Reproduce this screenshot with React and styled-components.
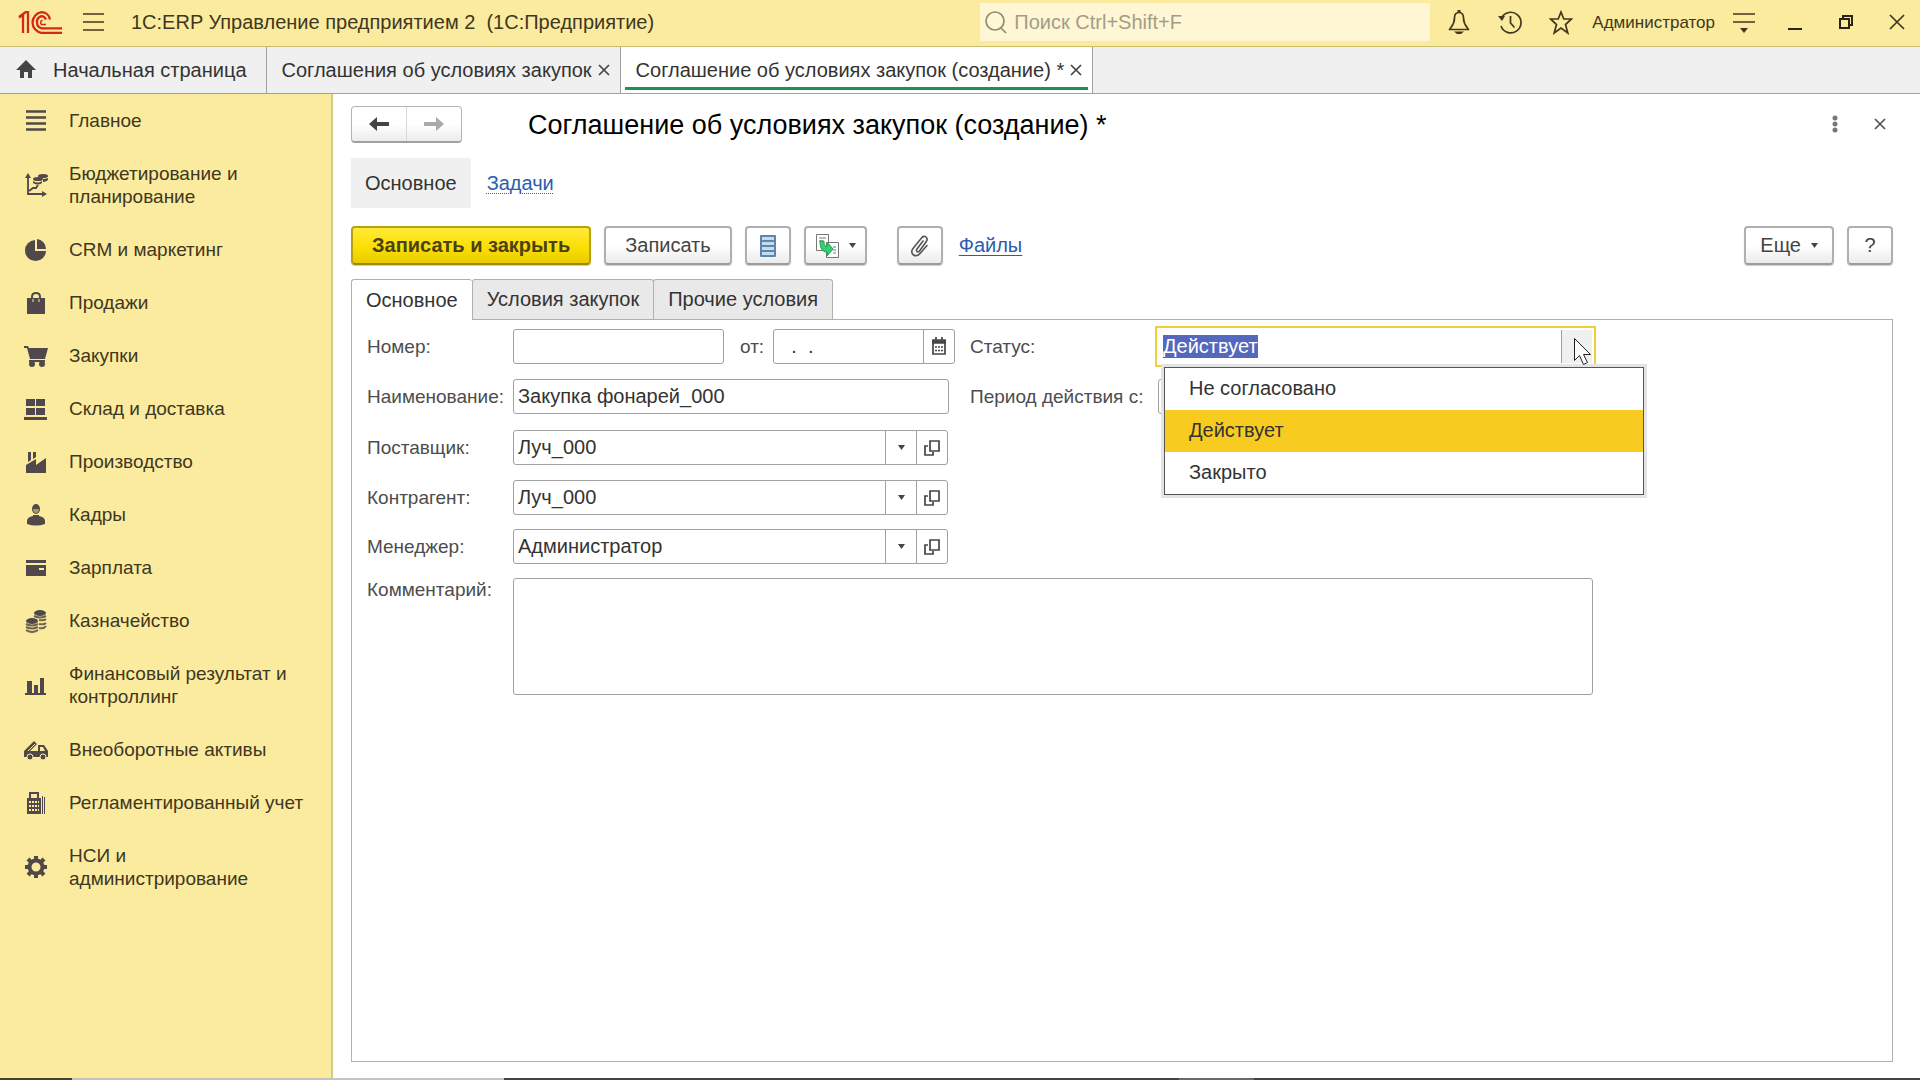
import React, { useEffect, useRef } from 'react'
import styled, { createGlobalStyle } from 'styled-components'

const GlobalStyle = createGlobalStyle`
    * {
        box-sizing: border-box;
    }

    body {
        margin: 0;
        background: #fff;
        color: #333;
        font-family: "Liberation Sans", Arial, sans-serif;
        font-size: 20px;
        line-height: 23px;
    }

    button, input, textarea {
        margin: 0;
        font: inherit;
        color: inherit;
    }

    svg {
        display: block;
        flex: none;
    }
`;

const Page = styled.div`
    min-height: 100vh;
    display: flex;
    flex-direction: column;
`;

/* ---------- top bar ---------- */

const TopBar = styled.header`
    height: 47px;
    padding: 0 10px 2px 18px;
    display: flex;
    align-items: center;
    background: #fbeb9e;
    border-bottom: 1px solid #c9bd72;
    color: #40371f;
`;

const IconButton = styled.button`
    padding: 0;
    border: 0;
    background: none;
    display: flex;
    align-items: center;
    justify-content: center;
    flex: none;
    width: ${props => props.$width || 24}px;
    height: ${props => props.$height || 32}px;
`;

const MenuButton = styled(IconButton)`
    margin: 0 25px 0 20px;
`;

const AppTitle = styled.div`
    flex: 1;
    white-space: pre;
`;

const Search = styled.label`
    width: 450px;
    height: 38px;
    padding-left: 4px;
    display: flex;
    align-items: center;
    gap: 6px;
    background: #fff6d4;
    color: #8f8a78;
`;

const SearchInput = styled.input`
    flex: 1;
    min-width: 0;
    padding: 0;
    border: 0;
    outline: 0;
    background: none;

    &::placeholder {
        color: #a39d88;
        opacity: 1;
    }
`;

const TopTools = styled.div`
    margin-left: 17px;
    display: flex;
    gap: 27px;
`;

const UserLink = styled.a`
    margin: 0 18px 0 19px;
    color: inherit;
    font-size: 17px;
    text-decoration: none;
`;

const WindowTools = styled.div`
    margin-left: 28px;
    padding-right: 1px;
    display: flex;
    gap: 27px;
`;

/* ---------- open windows ---------- */

const WindowTabs = styled.nav`
    height: 47px;
    display: flex;
    background: #f0f0f0;
    border-bottom: 1px solid #a0a0a0;
`;

const WindowTab = styled.div`
    padding: 0 4px 0 ${props => props.$home ? 14 : 15}px;
    display: flex;
    align-items: center;
    position: relative;
    background: ${props => props.$active ? '#fff' : 'none'};
    border-right: 1px solid #a0a0a0;

    &::after {
        content: "";
        display: ${props => props.$active ? 'block' : 'none'};
        position: absolute;
        left: 4px;
        right: 4px;
        bottom: 3px;
        height: 3px;
        background: #1c9256;
    }
`;

const WindowLink = styled.a`
    padding-right: ${props => props.$home ? 15 : 0}px;
    display: flex;
    align-items: center;
    gap: 15px;
    color: #333;
    text-decoration: none;
    white-space: nowrap;
`;

/* ---------- sections ---------- */

const Body = styled.div`
    flex: 1;
    display: flex;
`;

const Sidebar = styled.nav`
    width: 333px;
    flex: none;
    background: #fbeb9e;
    border-right: 2px solid #d8ca80;
    font-size: 19px;
`;

const Section = styled.a`
    padding: 15px 20px 15px 23px;
    display: flex;
    align-items: center;
    gap: 20px;
    color: #40371f;
    text-decoration: none;
`;

const SectionPicture = styled.svg`
    margin: -2px 0;
`;

const SectionName = styled.span`
    flex: 1;
    white-space: pre-line;
`;

/* ---------- form ---------- */

const Main = styled.main`
    flex: 1;
    min-width: 0;
    padding: 12px 27px 16px 18px;
    display: flex;
    flex-direction: column;
`;

const FormHeader = styled.div`
    display: flex;
    align-items: center;
`;

const History = styled.div`
    width: 111px;
    height: 37px;
    display: flex;
    border: 1px solid #b4b4b4;
    border-bottom: 2px solid #a0a0a0;
    border-radius: 4px;
    background: linear-gradient(#fff 50%, #ececec);
`;

const HistoryButton = styled(IconButton)`
    flex: 1;
    height: 34px;

    & + & {
        border-left: 1px solid #d8d8d8;
    }
`;

const FormTitle = styled.h1`
    margin: 0 0 0 66px;
    flex: 1;
    color: #000;
    font-size: 27px;
    line-height: 32px;
    font-weight: normal;
`;

const FormTools = styled.div`
    padding-bottom: 2px;
    display: flex;
    gap: 20px;
`;

const FormNav = styled.nav`
    margin-top: 15px;
    display: flex;
    align-items: center;
    gap: 16px;
`;

const FormNavCurrent = styled.span`
    padding: 14px 14px 13px;
    background: #f0f0f0;
`;

const FormLink = styled.a`
    color: #2a5db0;
    text-decoration: underline ${props => props.$dotted ? 'dotted' : 'solid'} 1px;
    text-underline-offset: 3px;
`;

const Toolbar = styled.div`
    margin-top: 18px;
    display: flex;
    align-items: center;
    gap: 13px;
`;

const ToolButton = styled.button`
    min-width: 46px;
    height: 39px;
    padding: 0 ${props => props.$pad || 0}px;
    display: flex;
    align-items: center;
    justify-content: center;
    gap: 10px;
    color: #444;
    background: linear-gradient(#fff 50%, #ebebeb);
    border: 2px solid #b0b0b0;
    border-bottom-color: #9c9c9c;
    border-radius: 4px;
    box-shadow: 0 1px 1px #ccc;
`;

const PrimaryButton = styled(ToolButton)`
    color: #4a4212;
    font-weight: bold;
    background: linear-gradient(#ffea38, #fade00 60%, #e8ca00);
    border-color: #b8a210;
    border-bottom-color: #9c8808;
`;

const AttachGroup = styled.div`
    margin-left: 17px;
    display: flex;
    align-items: center;
    gap: 16px;
`;

const ToolbarEnd = styled.div`
    margin-left: auto;
    display: flex;
    gap: 13px;
`;

const Tabs = styled.div`
    margin-top: 14px;
    display: flex;
`;

const Tab = styled.button`
    height: ${props => props.$active ? 41 : 40}px;
    margin-bottom: ${props => props.$active ? -1 : 0}px;
    margin-right: ${props => props.$active ? 0 : -1}px;
    padding: 0 14px;
    position: relative;
    color: #333;
    background: ${props => props.$active ? '#fff' : '#e9e9e9'};
    border: 1px solid #b0b0b0;
    border-right-width: ${props => props.$active ? 0 : 1}px;
    border-bottom-width: 0;
    border-radius: 3px 3px 0 0;
`;

const Panel = styled.section`
    flex: 1;
    padding: 8px 15px;
    display: grid;
    grid-template-columns: 146px 443px 14px 188px 435px;
    grid-template-rows: 36px 37px 37px 35px 35px 117px;
    row-gap: 14px;
    align-items: center;
    border: 1px solid #b0b0b0;
`;

const Label = styled.label`
    color: #4d4d4d;
    font-size: 19px;
    white-space: nowrap;
    grid-column: ${props => props.$second ? 4 : 1};
    align-self: ${props => props.$top ? 'start' : 'center'};
`;

const Row = styled.div`
    grid-column: 2;
    display: flex;
    align-items: center;
`;

const Field = styled.div`
    height: 35px;
    width: ${props => props.$width}px;
    display: flex;
    background: #fff;
    border: 1px solid #a0a0a0;
    border-radius: 3px;
`;

const FieldInput = styled.input`
    flex: 1;
    min-width: 0;
    padding: 0 0 0 ${props => props.$pad || 4}px;
    border: 0;
    outline: 0;
    background: none;
    color: #333;
`;

const FieldButton = styled.button`
    width: 31px;
    padding: 0;
    display: flex;
    align-items: center;
    justify-content: center;
    background: none;
    border: 0;
    border-left: 1px solid #a0a0a0;
`;

const DateLabel = styled.label`
    margin: 0 9px 0 16px;
    color: #4d4d4d;
    font-size: 19px;
`;

const Comment = styled.textarea`
    grid-column: 2 / 6;
    display: block;
    width: 100%;
    height: 117px;
    padding: 4px;
    border: 1px solid #a0a0a0;
    border-radius: 3px;
    outline: 0;
    resize: none;
`;

const StatusBox = styled.div`
    grid-column: 5;
    height: 41px;
    margin: 0 -3px;
    padding: 2px;
    display: flex;
    position: relative;
    background: #fff;
    border: 2px solid #eed03c;
`;

const StatusInput = styled(FieldInput)`
    &::selection {
        color: #fff;
        background: #5468bd;
    }
`;

const StatusButton = styled(FieldButton)`
    background: #f0f0f0;
`;

const Options = styled.ul`
    position: absolute;
    z-index: 1;
    top: 39px;
    left: 7px;
    width: 480px;
    margin: 0;
    padding: 0;
    list-style: none;
    background: #fff;
    border: 1px solid #555;
    box-shadow: 0 0 0 3px #e4e4e4;
`;

const Option = styled.li`
    height: 42px;
    padding: 0 24px;
    display: flex;
    align-items: center;
    color: #333;
    background: ${props => props.$selected ? '#f8cb20' : '#fff'};
`;

const Pointer = styled.svg`
    position: absolute;
    z-index: 2;
    top: 9px;
    left: 416px;
`;

const PeriodField = styled(Field)`
    grid-column: 5;
`;

/* ---------- strip under the window ---------- */

const Strip = styled.footer`
    height: 2px;
    display: grid;
    grid-template-columns: 72px 432px 1fr 75px 666px;
    background: #444;
`;

const StripPart = styled.div`
    background: ${props => props.$color};
`;

/* ---------- icons ---------- */

const Logo = () => (
    <svg width="44" height="23" viewBox="0 0 44 23" fill="none" stroke="#d4281c" strokeWidth="2.300">
        <path d="M1 6.500L5 3.500V22M10 22V1.200H7.500L1 6" />
        <path d="M32 8.500C31 4 27.500 1.200 23.500 1.200A10.400 10.400 0 0 0 23.500 21.800H44" />
        <path d="M28 8.500C27 6.500 25.500 5.200 23.500 5.200A6.300 6.300 0 0 0 23.500 17.300H44" />
        <path d="M24.500 9.200A2.500 2.500 0 0 0 23.500 13.500H28" strokeWidth="1.500" />
    </svg>
)

const Lines = () => (
    <svg width="22" height="20" stroke="#40371f" strokeWidth="1.600"><path d="M0 2H21M0 10H21M0 18H21" /></svg>
)

const Magnifier = () => (
    <svg width="24" height="24" fill="none" stroke="#8f8a78" strokeWidth="1.700">
        <circle cx="11" cy="11" r="9" /><path d="M17 18L22 23" />
    </svg>
)

const Bell = () => (
    <svg width="24" height="26" fill="none" stroke="#40371f" strokeWidth="1.700">
        <path d="M12 3.500C8.500 3.500 7.500 6 7.500 9C7.500 15 5 17 2.500 20.500H21.500C19 17 16.500 15 16.500 9C16.500 6 15.500 3.500 12 3.500Z" strokeLinejoin="round" />
        <path d="M12 1V4" strokeWidth="3" /><path d="M7 22.500H17L14 25H10Z" fill="#40371f" stroke="none" />
    </svg>
)

const Clock = () => (
    <svg width="24" height="26" fill="none" stroke="#40371f" strokeWidth="1.700">
        <path d="M3.500 9A10.300 10.300 0 1 1 3 17" /><path d="M12.500 7V14L16.500 18.500" />
        <path d="M0 7L7 7L4 12Z" fill="#40371f" stroke="none" />
    </svg>
)

const Star = () => (
    <svg width="24" height="26" fill="none" stroke="#40371f" strokeWidth="1.700">
        <path d="M12 3L14.800 10H22.500L16.500 15.500L18.800 24L12 19L5.200 24L7.500 15.500L1.500 10H9.200Z" />
    </svg>
)

const Settings = () => (
    <svg width="22" height="22" stroke="#40371f" strokeWidth="1.600">
        <path d="M0 3H22M0 11H22" /><path d="M7 17H15L11 22Z" fill="#40371f" stroke="none" />
    </svg>
)

const Minimize = () => (
    <svg width="14" height="20" stroke="#2c2514" strokeWidth="2"><path d="M0 17H14" /></svg>
)

const Restore = () => (
    <svg width="16" height="16" fill="none" stroke="#2c2514" strokeWidth="2">
        <path d="M2 5H11V14H2ZM5 5V2H14V11H11" />
    </svg>
)

const Cross = ({ size, color = '#444' }) => (
    <svg width={size} height={size} viewBox={`0 0 ${size} ${size}`} stroke={color} strokeWidth="1.700">
        <path d={`M1 1L${size - 1} ${size - 1}M${size - 1} 1L1 ${size - 1}`} />
    </svg>
)

const Home = () => (
    <svg width="24" height="20" fill="#444"><path d="M12 0L22 10H18V18H14V12H10V18H6V10H2Z" /></svg>
)

const Arrow = ({ color, flip }) => (
    <svg width="22" height="16" viewBox="0 0 22 16" fill={color}>
        <path d={flip ? 'M21 8L13 1V6H1V10H13V15Z' : 'M1 8L9 1V6H21V10H9V15Z'} />
    </svg>
)

const Dots = () => (
    <svg width="6" height="18" fill="#777"><circle cx="3" cy="3" r="2.500" /><circle cx="3" cy="9" r="2.500" /><circle cx="3" cy="15" r="2.500" /></svg>
)

const Caret = () => (
    <svg width="7" height="5" fill="#444"><path d="M0 0H7L3.500 5Z" /></svg>
)

const OpenIcon = () => (
    <svg width="16" height="18" fill="none" stroke="#444" strokeWidth="1.700">
        <path d="M6 2H15V12H6Z" /><path d="M4 7H1V16H9V13" />
    </svg>
)

const Calendar = () => (
    <svg width="14" height="18" fill="none" stroke="#444" strokeWidth="1.700">
        <path d="M1 3H13V17H1Z" /><path d="M0 5H14" strokeWidth="3.500" /><path d="M4 0V3M10 0V3" />
        <path d="M3 10H11M3 13.500H11" strokeDasharray="2 1" />
    </svg>
)

const ListIcon = () => (
    <svg width="16" height="22">
        <rect width="16" height="22" rx="1" fill="#5d87aa" />
        <path d="M2 3.500H14M2 8.500H14M2 13.500H14M2 18.500H14" stroke="#c3dcef" strokeWidth="3" />
    </svg>
)

const CopyIcon = () => (
    <svg width="24" height="24" fill="none" stroke="#777">
        <path d="M1.500 0.500H13.500V16.500H1.500Z" fill="#fff" /><path d="M4 4H11M4 7H8" />
        <path d="M11.500 8.500H23.500V23.500H11.500Z" fill="#fff" /><path d="M18 13H21M18 16H21M18 19H21" />
        <path d="M5 7H9C9 11 10 12.500 12 12.500V8L18 15L12 22V18C7 18 5 14 5 7Z" fill="#35cf72" stroke="#209c50" />
    </svg>
)

const Clip = () => (
    <svg width="20" height="22" fill="none" stroke="#555" strokeWidth="1.600" strokeLinecap="round">
        <path d="M13 6L7 14C5.500 16.500 8 18 9.500 16L16 7C19 3 14.500 -1 11.500 3L3 13.500C-1 18.500 5.500 23.500 10 18.500L17 10.500" />
    </svg>
)

const sectionIcons = {
    lines: <path d="M2 2.500H22M2 8.500H22M2 14.500H22M2 20.500H22" stroke="#50484a" strokeWidth="2.500" />,
    budget: <>
        <path d="M4 4V21H20M5 18L9 15H12L14 12" fill="none" stroke="#50484a" strokeWidth="1.800" />
        <path d="M1 5L4 0L7 5ZM18 18L23 21L18 24Z" />
        <ellipse cx="19" cy="3" rx="5" ry="2" /><ellipse cx="14" cy="6" rx="5" ry="2" />
        <path d="M9 8Q14 11 18 8V10Q14 13 9 10ZM19 6Q22 6 24 5V7Q22 9 19 9Z" />
    </>,
    pie: <path d="M11 2A10.500 10.500 0 1 0 22 13H11ZM13 1V11H22A10 10 0 0 0 13 1Z" />,
    bag: <><path d="M3 7H21V23H3Z" /><path d="M8 11V6Q8 2 12 2T16 6V11" fill="none" stroke="#50484a" strokeWidth="2" /><path d="M9 8V11M15 8V11" stroke="#fbeb9e" /></>,
    cart: <><path d="M0 2H4L5 4H24L21 15H6L3 4H0ZM5 16H21V18H5Z" /><circle cx="8" cy="20" r="3" /><circle cx="18" cy="20" r="3" /></>,
    boxes: <path d="M2 2H11V9H2ZM12 2H21V9H12ZM2 11H11V18H2ZM12 11H21V18H12ZM0 20H23V23H0Z" />,
    factory: <path d="M2 23V15L12 9V15L22 8V23ZM4 2H7V10L4 12ZM9 2H12V7L9 9Z" />,
    person: <><ellipse cx="12" cy="6" rx="4" ry="5" /><path d="M9 12H15V13Q21 14 21 18V21Q12 24 3 21V18Q3 14 9 13Z" /><path d="M9 6H15Q15 10 12 10T9 6Z" fill="#a0976f" /></>,
    card: <><path d="M2 4H22V7H2ZM2 9H22V20H2Z" /><path d="M15 12H20V14H15Z" fill="#fbeb9e" /></>,
    coins: <>
        <ellipse cx="16" cy="4" rx="6" ry="3" /><ellipse cx="8" cy="12" rx="6" ry="3" />
        <path d="M10 7Q16 10 22 7M15 11Q20 12 22 10M15 15Q20 16 22 14M15 19Q20 20 22 17M2 15Q8 18 14 15M2 18Q8 21 14 18M2 21Q8 25 14 21" fill="none" stroke="#6d6453" strokeWidth="2" />
    </>,
    bars: <path d="M3 8H8V20H3ZM10 12H14V20H10ZM16 5H20V20H16ZM1 20H22V22H1Z" />,
    truck: <>
        <path d="M0 13L10 3L13 6L6 13H14V7H20L24 13V19H0Z" /><path d="M16 9H19L21 13H16Z" fill="#fbeb9e" />
        <path d="M4 13L11 6" stroke="#fbeb9e" />
        <circle cx="6" cy="19" r="3" stroke="#fbeb9e" /><circle cx="19" cy="19" r="3" stroke="#fbeb9e" />
    </>,
    register: <>
        <path d="M5 1H15V7H17V23H3V7H5ZM18 5H19V23H18ZM20 6H21V23H20Z" /><path d="M7 3H13V7H7Z" fill="#fbeb9e" />
        <path d="M5 11H15M5 15H15M5 19H15" stroke="#fbeb9e" strokeWidth="2" strokeDasharray="2 1" />
    </>,
    gear: <>
        <circle cx="12" cy="12" r="6.500" fill="none" stroke="#50484a" strokeWidth="4" />
        <path d="M12 1V5M12 19V23M1 12H5M19 12H23M4 4L7 7M17 17L20 20M20 4L17 7M7 17L4 20" stroke="#50484a" strokeWidth="4" />
    </>,
}

const sections = [
    { name: 'Главное', icon: 'lines' },
    { name: 'Бюджетирование и\nпланирование', icon: 'budget' },
    { name: 'CRM и маркетинг', icon: 'pie' },
    { name: 'Продажи', icon: 'bag' },
    { name: 'Закупки', icon: 'cart' },
    { name: 'Склад и доставка', icon: 'boxes' },
    { name: 'Производство', icon: 'factory' },
    { name: 'Кадры', icon: 'person' },
    { name: 'Зарплата', icon: 'card' },
    { name: 'Казначейство', icon: 'coins' },
    { name: 'Финансовый результат и\nконтроллинг', icon: 'bars' },
    { name: 'Внеоборотные активы', icon: 'truck' },
    { name: 'Регламентированный учет', icon: 'register' },
    { name: 'НСИ и\nадминистрирование', icon: 'gear' },
]

const references = [
    { id: 'supplier', label: 'Поставщик:', value: 'Луч_000' },
    { id: 'contractor', label: 'Контрагент:', value: 'Луч_000' },
    { id: 'manager', label: 'Менеджер:', value: 'Администратор' },
]

const statuses = ['Не согласовано', 'Действует', 'Закрыто']

function SectionIcon({ name }) {
    return <SectionPicture width="26" height="26" viewBox="-1 -1 26 26" fill="#50484a">{sectionIcons[name]}</SectionPicture>
}

function Header() {
    return (<TopBar>
                <Logo />
                <MenuButton aria-label="Меню"><Lines /></MenuButton>
                <AppTitle>1С:ERP Управление предприятием 2  (1С:Предприятие)</AppTitle>
                <Search>
                    <Magnifier />
                    <SearchInput placeholder="Поиск Ctrl+Shift+F" aria-label="Поиск" />
                </Search>
                <TopTools>
                    <IconButton aria-label="Уведомления"><Bell /></IconButton>
                    <IconButton aria-label="История"><Clock /></IconButton>
                    <IconButton aria-label="Избранное"><Star /></IconButton>
                </TopTools>
                <UserLink href="#user">Администратор</UserLink>
                <IconButton $width={22} aria-label="Настройки"><Settings /></IconButton>
                <WindowTools>
                    <IconButton aria-label="Свернуть"><Minimize /></IconButton>
                    <IconButton aria-label="Восстановить"><Restore /></IconButton>
                    <IconButton aria-label="Закрыть"><Cross size={16} color="#40371f" /></IconButton>
                </WindowTools>
            </TopBar>)
}

function OpenWindows() {
    return (<WindowTabs>
                <WindowTab $home>
                    <WindowLink $home href="#home"><Home />Начальная страница</WindowLink>
                </WindowTab>
                <WindowTab>
                    <WindowLink href="#agreements">Соглашения об условиях закупок</WindowLink>
                    <IconButton aria-label="Закрыть вкладку"><Cross size={12} /></IconButton>
                </WindowTab>
                <WindowTab $active>
                    <WindowLink href="#agreement">Соглашение об условиях закупок (создание) *</WindowLink>
                    <IconButton aria-label="Закрыть вкладку"><Cross size={12} /></IconButton>
                </WindowTab>
            </WindowTabs>)
}

function StatusField() {
    const input = useRef(null)

    useEffect(() => {
        input.current.focus()
        input.current.select()
    }, [])

    return (<StatusBox>
                <StatusInput ref={input} id="status" role="combobox" aria-expanded="true" aria-controls="statuses" defaultValue="Действует" />
                <StatusButton aria-label="Выбрать статус"><Caret /></StatusButton>
                <Options id="statuses" role="listbox">
                    {statuses.map(status => (
                        <Option key={status} role="option" aria-selected={status === 'Действует'} $selected={status === 'Действует'}>{status}</Option>
                    ))}
                </Options>
                <Pointer width="20" height="30" viewBox="0 0 20 30" fill="#fff" stroke="#222">
                    <path d="M1.500 1.500V23.500L6.500 18.500L10.500 27.500L14.500 25.500L10.500 17.500H17.500Z" />
                </Pointer>
            </StatusBox>)
}

function App() {
    return (<Page>
                <GlobalStyle />
                <Header />
                <OpenWindows />
                <Body>
                    <Sidebar>
                        {sections.map(section => (
                            <Section key={section.icon} href={'#' + section.icon}>
                                <SectionIcon name={section.icon} />
                                <SectionName>{section.name}</SectionName>
                            </Section>
                        ))}
                    </Sidebar>
                    <Main>
                        <FormHeader>
                            <History>
                                <HistoryButton aria-label="Назад"><Arrow color="#444" /></HistoryButton>
                                <HistoryButton aria-label="Вперед"><Arrow color="#aaa" flip /></HistoryButton>
                            </History>
                            <FormTitle>Соглашение об условиях закупок (создание) *</FormTitle>
                            <FormTools>
                                <IconButton aria-label="Действия"><Dots /></IconButton>
                                <IconButton $width={26} aria-label="Закрыть форму"><Cross size={12} color="#555" /></IconButton>
                            </FormTools>
                        </FormHeader>
                        <FormNav>
                            <FormNavCurrent>Основное</FormNavCurrent>
                            <FormLink $dotted href="#tasks">Задачи</FormLink>
                        </FormNav>
                        <Toolbar>
                            <PrimaryButton $pad={19}>Записать и закрыть</PrimaryButton>
                            <ToolButton $pad={19}>Записать</ToolButton>
                            <ToolButton aria-label="Список"><ListIcon /></ToolButton>
                            <ToolButton $pad={9} aria-label="Создать на основании"><CopyIcon /><Caret /></ToolButton>
                            <AttachGroup>
                                <ToolButton aria-label="Прикрепить"><Clip /></ToolButton>
                                <FormLink href="#files">Файлы</FormLink>
                            </AttachGroup>
                            <ToolbarEnd>
                                <ToolButton $pad={14}>Еще<Caret /></ToolButton>
                                <ToolButton>?</ToolButton>
                            </ToolbarEnd>
                        </Toolbar>
                        <Tabs role="tablist">
                            <Tab role="tab" aria-selected="true" $active>Основное</Tab>
                            <Tab role="tab">Условия закупок</Tab>
                            <Tab role="tab">Прочие условия</Tab>
                        </Tabs>
                        <Panel>
                            <Label htmlFor="number">Номер:</Label>
                            <Row>
                                <Field $width={211}><FieldInput id="number" /></Field>
                                <DateLabel htmlFor="date">от:</DateLabel>
                                <Field $width={182}>
                                    <FieldInput id="date" $pad={6} defaultValue="  .  ." />
                                    <FieldButton aria-label="Календарь"><Calendar /></FieldButton>
                                </Field>
                            </Row>
                            <Label $second htmlFor="status">Статус:</Label>
                            <StatusField />

                            <Label htmlFor="name">Наименование:</Label>
                            <Row><Field $width={436}><FieldInput id="name" defaultValue="Закупка фонарей_000" /></Field></Row>
                            <Label $second htmlFor="period">Период действия с:</Label>
                            <PeriodField $width={182}><FieldInput id="period" /></PeriodField>

                            {references.map(item => (
                                <React.Fragment key={item.id}>
                                    <Label htmlFor={item.id}>{item.label}</Label>
                                    <Row>
                                        <Field $width={435}>
                                            <FieldInput id={item.id} defaultValue={item.value} />
                                            <FieldButton aria-label="Выбрать"><Caret /></FieldButton>
                                            <FieldButton aria-label="Открыть"><OpenIcon /></FieldButton>
                                        </Field>
                                    </Row>
                                </React.Fragment>
                            ))}

                            <Label $top htmlFor="comment">Комментарий:</Label>
                            <Comment id="comment" />
                        </Panel>
                    </Main>
                </Body>
                <Strip>
                    <StripPart $color="#4a4130" />
                    <StripPart $color="#c3c3c3" />
                    <StripPart $color="#444" />
                    <StripPart $color="#6a6a6a" />
                </Strip>
            </Page>)
}

export default App
